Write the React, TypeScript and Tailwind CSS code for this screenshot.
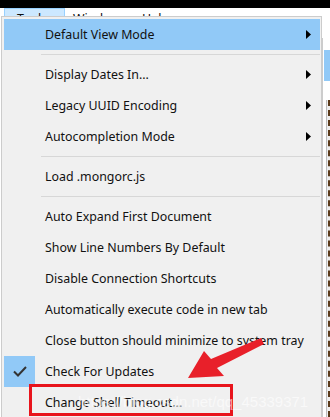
import { Fragment } from "react";

type Entry =
  | { kind: "item"; label: string; sub?: boolean; active?: boolean; checked?: boolean }
  | { kind: "sep" };

const entries: Entry[] = [
  { kind: "item", label: "Default View Mode", sub: true, active: true },
  { kind: "sep" },
  { kind: "item", label: "Display Dates In...", sub: true },
  { kind: "item", label: "Legacy UUID Encoding", sub: true },
  { kind: "item", label: "Autocompletion Mode", sub: true },
  { kind: "sep" },
  { kind: "item", label: "Load .mongorc.js" },
  { kind: "sep" },
  { kind: "item", label: "Auto Expand First Document" },
  { kind: "item", label: "Show Line Numbers By Default" },
  { kind: "item", label: "Disable Connection Shortcuts" },
  { kind: "item", label: "Automatically execute code in new tab" },
  { kind: "item", label: "Close button should minimize to system tray" },
  { kind: "item", label: "Check For Updates", checked: true },
  { kind: "item", label: "Change Shell Timeout..." },
];

function SubArrow() {
  return (
    <svg width="5" height="9" viewBox="0 0 5 9" className="shrink-0">
      <path d="M0 0 L5 4.5 L0 9 Z" fill="#000" />
    </svg>
  );
}

function Check() {
  return (
    <div className="absolute left-0 top-0 flex h-full w-[31px] items-center justify-center bg-[#91c9f7]">
      <svg width="14" height="11" viewBox="0 0 14 11">
        <path d="M1 5.5 L5 9.5 L13 1" fill="none" stroke="#333" strokeWidth="2" />
      </svg>
    </div>
  );
}

export default function App() {
  return (
    <div
      className="relative flex h-[417px] w-[330px] flex-col overflow-hidden bg-white text-[12.4px] text-[#111]"
      style={{ fontFamily: '"Noto Sans", "Liberation Sans", sans-serif' }}
    >
      <div className="h-[8px] shrink-0 bg-black" />

      {/* menu bar behind the dropdown */}
      <div className="flex h-[30px] shrink-0 items-start gap-[8px] pl-[4px] leading-none">
        <div className="h-[22px] w-[61px] border border-[#99d1ff] bg-[#cce8ff] pl-[12px] pt-[4px]">Tools</div>
        <div className="pt-[5px]">Window</div>
        <div className="pl-[14px] pt-[5px]">Help</div>
      </div>

      {/* window body; only its right edge shows past the menu */}
      <div className="flex flex-1 justify-end">
        <div className="flex w-[8px] flex-col border-l border-[#cccccc]">
          <div className="h-[12px]" />
          <div className="ml-[1px] h-[31px] bg-[#91c9f7]" />
          <div className="h-[19px]" />
          <div className="ml-[3px] flex flex-1 border-l border-[#bdbdbd] bg-[#eeeeee] pl-[1px]">
            <div className="border-l-2 border-dashed border-[#5a3a1a]" />
          </div>
        </div>
      </div>

      {/* dropdown */}
      <div className="absolute left-[1px] top-[16px] w-[321px] border border-[#cccccc] bg-[#f0f0f0] pl-[2px] pr-[1px] pt-[2px]">
        {entries.map((e, i) => (
          <Fragment key={i}>
            {e.kind === "sep" ? (
              <div className="flex h-[9px] items-center pl-[37px]">
                <div className="h-px w-full bg-[#d7d7d7]" />
              </div>
            ) : (
              <div
                className={`relative flex h-[31px] items-center justify-between pl-[41px] pr-[9px] ${
                  e.active ? "bg-[#91c9f7]" : ""
                }`}
              >
                {e.checked && <Check />}
                <span className="whitespace-nowrap pt-[2px]">{e.label}</span>
                {e.sub && <SubArrow />}
              </div>
            )}
          </Fragment>
        ))}
      </div>

      {/* annotation */}
      <div className="absolute left-[29px] top-[384px] h-[32px] w-[204px] border-[3px] border-[#e8141c]" />
      <svg className="pointer-events-none absolute left-0 top-0" width="330" height="417">
        <polygon
          points="188,378 204,351 211,359 261,338 264,344 217,368 224,376"
          fill="#e8202a"
        />
      </svg>
      <div
        className="pointer-events-none absolute left-[78px] top-[391px] whitespace-nowrap text-[15px] text-white opacity-60"
        style={{ fontFamily: '"Liberation Sans", sans-serif' }}
      >
        https://blog.csdn.net/qq_45339371
      </div>
    </div>
  );
}
